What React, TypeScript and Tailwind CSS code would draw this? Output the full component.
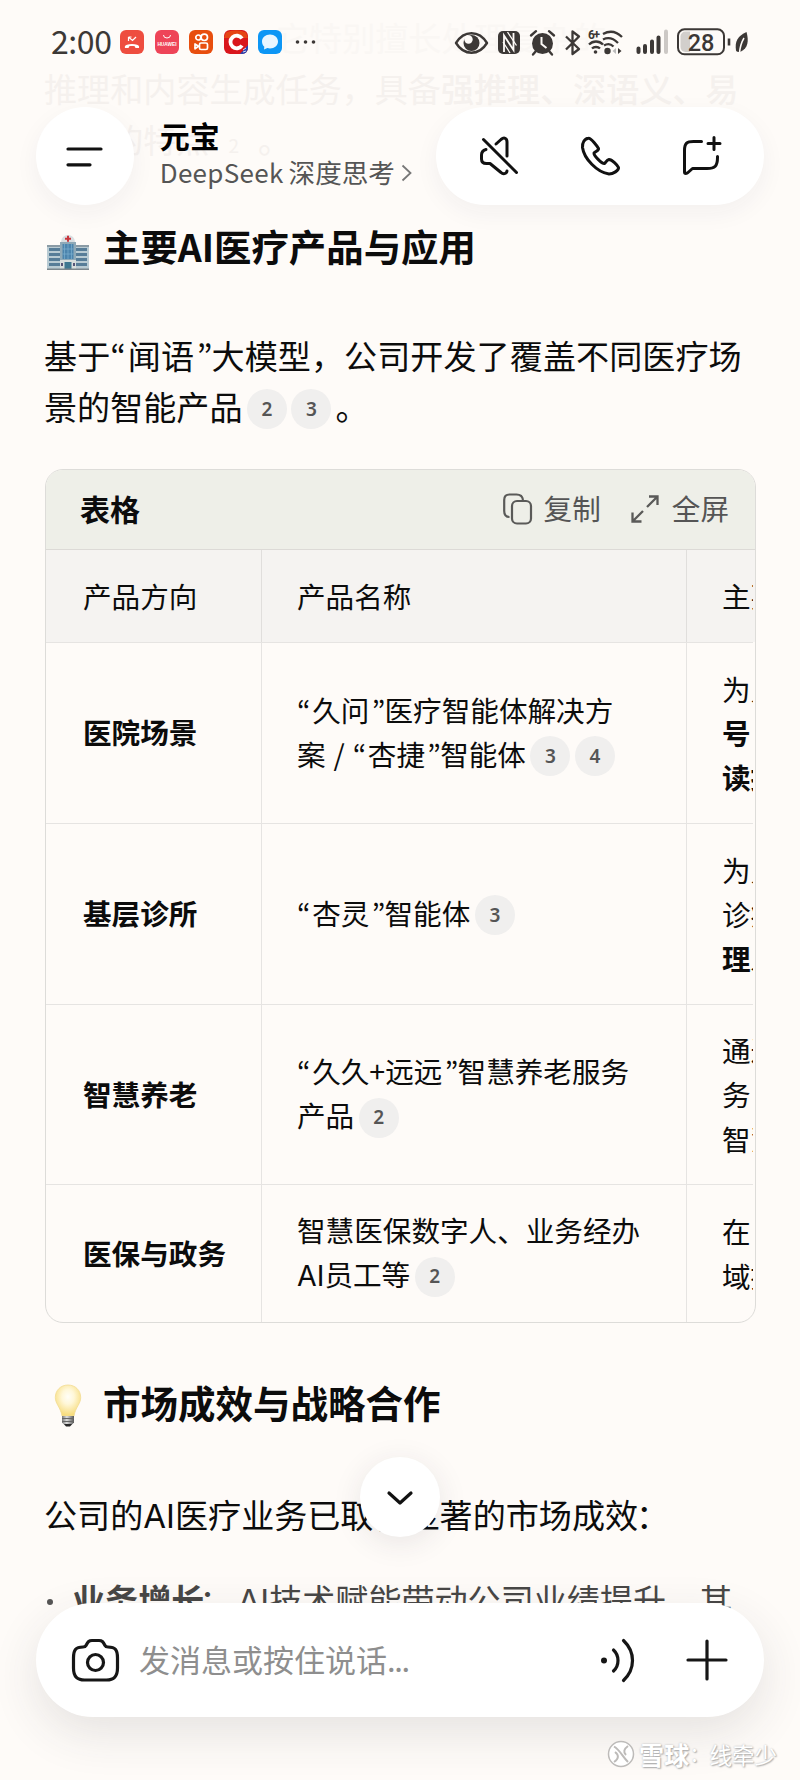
import type { ReactNode } from "react";

const SANS = "font-['Noto_Sans_CJK_SC','Noto_Sans',sans-serif]";

function Open() {
  return <span className="inline-block w-[0.53em] text-left font-['Noto_Sans_CJK_KR']">“</span>;
}

function Shut() {
  return <span className="inline-block w-[0.53em] pl-[0.08em] text-left font-['Noto_Sans_CJK_KR']">”</span>;
}

function AI() {
  return <span className="font-['Inter']">AI</span>;
}

function Ref({ n }: { n: number }) {
  return (
    <span className="ml-[4.500px] inline-flex h-10 w-10 -translate-y-[2px] items-center justify-center rounded-full bg-[#f0efee] align-middle font-['Noto_Sans'] text-[19px] leading-none font-semibold text-[#555]">
      {n}
    </span>
  );
}

function StatusBar() {
  return (
    <div className="flex h-[84px] items-center px-[51px] pb-px text-[#3c3836]">
      <div className="w-[69px] pb-[3px] text-[32px] leading-none font-normal tracking-[-0.4px] whitespace-nowrap">2:00</div>
      <div className="flex gap-[10.6px]">
        <svg width="24" height="24" viewBox="0 0 24 24">
          <rect width="24" height="24" rx="6" fill="#ee4d3f" />
          <path d="M5 18c-.6-1.4.2-2.5 2-3.200 3-1.200 7-1.200 10 0 1.800.7 2.600 1.800 2 3.200h-3.500l-.8-1.700c-1.700-.5-3.700-.5-5.400 0L8.500 18z" fill="#fff" />
          <path d="M8.500 7v4M8.500 7h3M9 7.500l3.500 3L16 7" stroke="#fff" strokeWidth="1.200" fill="none" />
        </svg>
        <svg width="24" height="24" viewBox="0 0 24 24">
          <rect width="24" height="24" rx="6" fill="#ee4458" />
          <path d="M8.500 5a3.500 3 0 0 0 7 0" stroke="#fff" strokeWidth="1" fill="none" />
          <text x="12" y="15.500" textAnchor="middle" fontSize="4.800" fontWeight="700" fill="#fff" fontFamily="Liberation Sans">HUAWEI</text>
        </svg>
        <svg width="24" height="24" viewBox="0 0 24 24">
          <rect width="24" height="24" rx="6" fill="#e84e0e" />
          <g fill="none" stroke="#fff" strokeWidth="1.700">
            <circle cx="9.300" cy="7.500" r="2.500" />
            <circle cx="15.300" cy="7.300" r="3.200" />
            <rect x="10.500" y="13" width="8" height="6.500" rx="1.500" />
            <path d="M9.500 16.200L6 14v4.800z" strokeLinejoin="round" />
          </g>
        </svg>
        <svg width="24" height="24" viewBox="0 0 24 24">
          <rect width="24" height="24" rx="6" fill="#d9161c" />
          <path d="M2 2.500Q12-2 22 2.500L24 8H0z" fill="#ea5a12" opacity=".7" />
          <path d="M24 15v3a6 6 0 0 1-6 6h-2z" fill="#2745b5" />
          <path d="M18 8.500A6.300 6.300 0 1 0 18 15.500" stroke="#fff" strokeWidth="3.800" fill="none" />
          <path d="M19 20l3-2M19 22l3-1" stroke="#fff" strokeWidth=".8" />
        </svg>
        <svg width="24" height="24" viewBox="0 0 24 24">
          <rect width="24" height="24" rx="6" fill="#0d96f5" />
          <path d="M12 4.500c4.500 0 8 3 8 7s-3.500 7-8 7c-1 0-1.800-.1-2.600-.4L6 19.500l.3-2.800C4.900 15.400 4 13.600 4 11.500c0-4 3.500-7 8-7z" fill="#eaf6ff" />
        </svg>
      </div>
      <svg className="ml-[13px]" width="22" height="6" viewBox="0 0 22 6" fill="#3c3836">
        <circle cx="2.500" cy="3" r="1.800" />
        <circle cx="10.500" cy="3" r="1.800" />
        <circle cx="18.500" cy="3" r="1.800" />
      </svg>
      <svg className="ml-auto" width="296" height="30" viewBox="453 26 296 30" fill="none" stroke="#3c3836">
        <path d="M456 42C464 29 479 29 487 42C479 55 464 55 456 42Z" strokeWidth="2.400" strokeLinejoin="round" />
        <circle cx="471.500" cy="42" r="8" fill="#3c3836" stroke="none" />
        <circle cx="468.500" cy="38.500" r="4.200" fill="#fefbf8" stroke="none" />
        <rect x="498" y="30" width="22" height="23" rx="5" fill="#3c3836" stroke="none" />
        <path d="M504 51V34.500L513.500 49V32" stroke="#fefbf8" strokeWidth="1.800" />
        <path d="M507.500 31L516.500 44.500M510 52l-7-11" stroke="#fefbf8" strokeWidth="1.300" />
        <circle cx="542.500" cy="42.500" r="10.500" fill="#3c3836" stroke="none" />
        <path d="M531 34.500l5-4.300M554 34.500l-5-4.300M536 50l-3 3.500M549 50l3 3.500" strokeWidth="2.400" strokeLinecap="round" />
        <path d="M541.500 36v7l5 4" stroke="#fefbf8" strokeWidth="2" />
        <path d="M566 35.500L579 48L572.500 53V30.500L579 35.500L566 48.500" strokeWidth="2.300" strokeLinejoin="round" />
        <text x="588" y="38" fontSize="12" fontWeight="700" fill="#3c3836" stroke="none" fontFamily="Roboto" textLength="12">6+</text>
        <path d="M603 33C611 28.500 617 31 622 36M603 38.500C609 35.500 614 38 618 42M604 44.500C608 42 611 43 613.500 45.500M589 43.500C593 39.500 599 39.500 603 43.500M592 47.500C594 45.500 598 45.500 600 47.500" strokeWidth="2.300" />
        <circle cx="595.500" cy="51" r="1.800" fill="#3c3836" stroke="none" />
        <circle cx="607.500" cy="50" r="3.200" fill="#3c3836" stroke="none" />
        <path d="M616 47v6l-3.500-3z" fill="#bbb" stroke="none" />
        <path d="M618 47v6l3.500-3z" fill="#3c3836" stroke="none" />
        <path d="M638.500 47.500V51M645 45V51M652 40.500V51M658.500 36.500V51" strokeWidth="4" strokeLinecap="round" />
        <path d="M666 30.500V51" stroke="#ccc8c5" strokeWidth="4" strokeLinecap="round" />
        <rect x="678" y="28.300" width="46" height="25" rx="6.500" strokeWidth="2" />
        <path d="M685.500 30.500H690v20.500h-4.500a5 5 0 0 1-5-5v-10.500a5 5 0 0 1 5-5z" fill="#d2cfcc" stroke="none" />
        <text x="701" y="49.500" textAnchor="middle" fontSize="23.500" fontWeight="500" fill="#3c3836" stroke="none" fontFamily="Roboto">28</text>
        <path d="M729 37.500V44.500" strokeWidth="2.600" />
        <path d="M746.500 31C738 35 734.500 40 736 49.500C737 51.500 739.500 51 741 50.500C748 47 749 40 746.500 31Z" fill="#3c3836" stroke="none" />
        <path d="M744 37C741 42 740 46 739.500 52" stroke="#fefbf8" strokeWidth="1.500" />
      </svg>
    </div>
  );
}

function Header() {
  return (
    <header className="absolute inset-x-0 top-0">
      <StatusBar />
      <div className="flex px-9 pt-[23px]">
        <button className="flex h-[98px] w-[98px] items-center justify-center rounded-full bg-white shadow-[0_8px_24px_rgba(40,40,70,0.05)]">
          <svg width="38" height="24" viewBox="0.500 -0.500 38 24" stroke="#111" strokeWidth="3.200" strokeLinecap="round">
            <path d="M2.500 4.500H35.500M2.500 20.300H24.500" />
          </svg>
        </button>
        <div className="ml-[26px] w-[277px] pt-[6px] whitespace-nowrap">
          <div className="text-[30px] leading-[44px] font-bold text-black">元宝</div>
          <div className="flex items-center pt-px text-[26px] leading-[28px] text-[#555]">
            <span className="tracking-[0.3px]">DeepSeek</span>
            <span className="ml-[5px] text-[26.600px]">深度思考</span>
            <svg className="ml-[5px]" width="14" height="20" viewBox="0 0 14 20" fill="none" stroke="#777" strokeWidth="1.800">
              <path d="M2.500 3.500L10.500 11L2.500 18.500" />
            </svg>
          </div>
        </div>
        <div className="flex h-[98px] w-[329px] items-center rounded-full bg-white pl-[42px] shadow-[0_8px_24px_rgba(40,40,70,0.05)]">
          <svg width="264" height="44" viewBox="479 134 264 44" fill="none" stroke="#111" strokeWidth="3" strokeLinecap="round" strokeLinejoin="round">
            <path d="M484.500 139.500L517.500 172.500" />
            <path d="M497 144L502 139.500C505 137 508 138 508 142V156" />
            <path d="M487 149.500C483.500 150.500 482.500 152.500 482.500 155V159C482.500 162 484.500 163.500 487.500 163.500H491L502 172.500C504 174.500 507.500 174 508 171" />
            <path d="M589.500 138.200C592 137.800 598.500 146.500 599.500 148.500C600 150.500 596 151.500 595 153C594.500 155.500 603 164 605.500 163.500C607 162.500 607.500 160 610 159.500C613 159.500 618.500 165 619.500 167.500C620 170.500 614 174 610 174C598 172.500 585 158.500 583.500 147.500C583 143 585.500 138.500 589.500 138.200Z" />
            <path d="M702.500 141.500H694.500C687.500 141.500 685.500 143.500 685.500 150.500V172C685.500 174 688 173.500 689 172.500L693.500 168.500H708C716 168.500 718.500 166 718.500 157.500V156.500" />
            <path d="M715 137.500V149.500M709 143.500H721" />
          </svg>
        </div>
      </div>
    </header>
  );
}

function Hospital() {
  return (
    <svg width="42" height="36" viewBox="0 0 42 36">
      <path d="M0 10h14v25H0zM28 10h14v25H28z" fill="#b9cbd3" />
      <path d="M0 10h14v2H0zM28 10h14v2H28z" fill="#8b9ba5" />
      <path d="M2 13h11v3H2zM2 18h11v3H2zM2 23h11v3H2zM2 28h11v3H2zM29 13h11v3H29zM29 18h11v3H29zM29 23h11v3H29zM29 28h11v3H29z" fill="#577d98" />
      <path d="M13 7h16v28H13z" fill="#8fa9b7" />
      <path d="M15.500 9h11v15h-11z" fill="#4c84ad" />
      <path d="M17.500 9v15M21 9v15M24.500 9v15M15.500 14h11M15.500 19h11" stroke="#7bb0d0" strokeWidth=".7" />
      <path d="M13 25h16v10H13z" fill="#d7dedd" />
      <path d="M17.500 27h7v8h-7z" fill="#3e7790" />
      <path d="M14 28h2v3h-2zM26 28h2v3h-2z" fill="#557" />
      <path d="M14 7a7 7 0 0 1 14 0z" fill="#d9dfe2" />
      <path d="M21 .8v6M18 3.800h6" stroke="#c9353c" strokeWidth="2" />
      <path d="M0 34.200h42" stroke="#7c878d" strokeWidth="1.500" />
    </svg>
  );
}

function Bulb() {
  return (
    <svg width="28" height="44" viewBox="0 0 28 44">
      <defs>
        <radialGradient id="glow" cx=".5" cy=".38" r=".6">
          <stop offset="0" stopColor="#fffef8" />
          <stop offset=".4" stopColor="#fff7d8" />
          <stop offset="1" stopColor="#f7dc7c" />
        </radialGradient>
        <linearGradient id="base" x1="0" x2="1">
          <stop offset="0" stopColor="#777" />
          <stop offset=".4" stopColor="#ddd" />
          <stop offset="1" stopColor="#555" />
        </linearGradient>
      </defs>
      <path d="M14 1C21.500 1 26.700 6.500 26.700 13.500C26.700 20 21.500 23 20 32H8C6.500 23 1.300 20 1.300 13.500C1.300 6.500 6.500 1 14 1Z" fill="url(#glow)" stroke="#f2dc93" strokeWidth=".8" />
      <path d="M8 32h12v6.500l-3.500 3.500h-5L8 38.500z" fill="url(#base)" />
      <path d="M8 34.500h12M8 37.500h12" stroke="#666" strokeWidth="1" />
      <path d="M10 40h8l-2 2.500h-4z" fill="#292929" />
    </svg>
  );
}

function Row({ name, cell, extra, height }: { name: string; cell: ReactNode; extra: ReactNode; height: string }) {
  return (
    <div className={`grid w-[707px] grid-cols-[216px_425px_66px] border-t border-[#e6e4e2] ${height}`}>
      <div className="flex items-center border-r border-[#e6e4e2] pb-px pl-[37px] font-bold">{name}</div>
      <div className="flex items-center border-r border-[#e6e4e2] pl-[35px]">
        <div>{cell}</div>
      </div>
      <div className="flex items-center overflow-hidden pl-[35px]">
        <div>{extra}</div>
      </div>
    </div>
  );
}

function ProductTable() {
  return (
    <section className="mt-[37px] h-[854px] w-[711px] overflow-hidden rounded-[18px] border-[1.500px] border-[#dddcd9] text-[28.600px] leading-[44.200px] whitespace-nowrap text-[#0c0c0c]">
      <div className="flex h-[79px] items-center bg-[#eeefe8] pr-[26px] pl-[34px]">
        <div className="pb-[3px] text-[30px] font-bold">表格</div>
        <div className="ml-auto flex items-center pb-px text-[28.600px] text-[#555]">
          <svg width="30" height="32" viewBox="0.500 0 30 32" fill="none" stroke="#5a5a58" strokeWidth="2.200">
            <path d="M7 24C3 24 1.700 22 1.700 18V7C1.700 3 3.500 1.500 7 1.500H14C18 1.500 20 3 20.500 7" />
            <rect x="9.500" y="8" width="19" height="22.500" rx="5" />
          </svg>
          <span className="ml-[11px] pb-[2px]">复制</span>
          <svg className="ml-[30px]" width="28" height="28" viewBox="0 0 28 28" fill="none" stroke="#5a5a58" strokeWidth="2.300">
            <path d="M18 1.500H26.500V10M26 2L16 12M1.500 17.500V26.500H10.500M2 26L12 16" />
          </svg>
          <span className="ml-[13px] pb-[2px]">全屏</span>
        </div>
      </div>
      <div className="grid h-[93px] grid-cols-[216px_425px_66px] border-t border-[#dcdad6] bg-[#f5f3f1]">
        <div className="flex items-center border-r border-[#e0dedc] pl-[37px]">产品方向</div>
        <div className="flex items-center border-r border-[#e0dedc] pl-[35px]">产品名称</div>
        <div className="flex items-center overflow-hidden pl-[35px]">主要功能</div>
      </div>
      <Row
        height="h-[181px]"
        name="医院场景"
        cell={<><Open />久问<Shut />医疗智能体解决方<br /><span className="[word-spacing:1.500px]">案 / </span><Open />杏捷<Shut />智能体<Ref n={3} /><Ref n={4} /></>}
        extra={<>为人们提供<br /><b>号 导诊</b><br /><b>读报告</b></>}
      />
      <Row
        height="h-[181px]"
        name="基层诊所"
        cell={<><Open />杏灵<Shut />智能体<Ref n={3} /></>}
        extra={<>为人们提供<br />诊疗服务<br /><b>理人员</b></>}
      />
      <Row
        height="h-[180px]"
        name="智慧养老"
        cell={<><Open />久久+远远<Shut />智慧养老服务<br />产品<Ref n={2} /></>}
        extra={<>通过智能服<br />务 健康<br />智慧养老</>}
      />
      <Row
        height="h-[138px]"
        name="医保与政务"
        cell={<>智慧医保数字人、业务经办<br /><AI />员工等<Ref n={2} /></>}
        extra={<>在 医保领<br />域提供</>}
      />
    </section>
  );
}

function Composer() {
  return (
    <footer className="absolute inset-x-0 bottom-0 h-[220px] px-9 pt-[43px]">
      <div className="flex h-[114px] items-center rounded-full bg-white pr-[36px] pl-[35px] shadow-[0_16px_48px_rgba(50,50,60,0.12)]">
        <svg width="50" height="46" viewBox="0.500 -1 50 46" fill="none" stroke="#161616" strokeWidth="3.200" strokeLinejoin="round">
          <path d="M15.500 7.500C17.500 3.500 18.500 2.500 21.500 2.500H28.500C31.500 2.500 32.500 3.500 34.500 7.500C35 8.500 36 9 37.500 9C45 9 47 12 47 20V30C47 39 43 42 36 42H14C7 42 3 39 3 30V20C3 12 5 9 12.500 9C14 9 15 8.500 15.500 7.500Z" />
          <circle cx="25" cy="24.500" r="8" />
        </svg>
        <span className="ml-[18px] pb-[3px] text-[31px] leading-none text-[#8e8e8e]">发消息或按住说话<span className="tracking-[-1.400px]">...</span></span>
        <svg className="ml-auto" width="36" height="46" viewBox="0.500 -1 36 46" fill="none" stroke="#161616" strokeWidth="3.200" strokeLinecap="round">
          <circle cx="4.500" cy="22.500" r="3" fill="#161616" stroke="none" />
          <path d="M14 12C20 17.500 20 27.500 14 33M24 2.500C36 14 36 31 24 42.500" />
        </svg>
        <svg className="ml-[50px]" width="42" height="42" viewBox="0 0 42 42" stroke="#161616" strokeWidth="3.200" strokeLinecap="round">
          <path d="M21 2V40M2 21H40" />
        </svg>
      </div>
      <div className="mt-[21px] mr-[-13px] flex items-center justify-end text-white [text-shadow:1px_1px_1.500px_#aaa,0_0_2px_#bbb]">
        <svg width="28" height="28" viewBox="0 0 28 28" fill="none" stroke="#bdbbb9" strokeWidth="1.500">
          <circle cx="14" cy="14" r="12.500" fill="#fff" />
          <path d="M7 6.500C13 10 15 16 21 22M21 6C17 9 16 12 19 15M7 22C12 19 12 15 8 12" strokeWidth="2" />
        </svg>
        <span className="ml-[4px] text-[25px] leading-8 font-bold tracking-[0.300px]">雪球</span>
        <span className="w-[20px] text-[20px] leading-8">：</span>
        <span className="text-[22.500px] leading-8">线牵少</span>
      </div>
    </footer>
  );
}

export default function App() {
  return (
    <div className={`relative h-[1780px] w-[800px] overflow-hidden bg-[#fefbf8] ${SANS}`}>
      <main className="px-[45px] text-[33.100px] leading-[51px] whitespace-nowrap text-[#0c0c0c]">
        <div className="-ml-px h-[220px] pt-[12px] text-[#f5f1ee]">
          <p className="pl-[232px] text-[#faf7f4]">它特别擅长处理复杂的</p>
          <p>推理和内容生成任务，具备<span className="font-medium">强推理、深语义、易</span></p>
          <p>用性的特点<span className="px-[19px] align-middle text-[19px]">2</span>。</p>
        </div>
        <h2 className="flex h-[52px] items-center text-[37.400px] font-bold">
          <span className="mt-[13px] ml-[2px] w-[56px]"><Hospital /></span>
          主要AI医疗产品与应用
        </h2>
        <p className="-ml-px mt-[58px] tracking-[0.050px]">
          基于<Open />闻语<Shut />大模型，公司开发了覆盖不同医疗场
        </p>
        <p className="-ml-px h-[51px]">景的智能产品<Ref n={2} /><Ref n={3} /><span className="ml-[4px]">。</span></p>
        <ProductTable />
        <h2 className="mt-[52px] flex h-[52px] items-center text-[37.500px] font-bold">
          <span className="mt-[10px] ml-[9px] w-[49px]"><Bulb /></span>
          市场成效与战略合作
        </h2>
        <p className="-ml-px mt-[62px]">公司的<AI />医疗业务已取得显著的市场成效<span className="-ml-[2px]">：</span></p>
        <div className="mt-[32px] flex text-[#484746]">
          <span className="mt-[25px] mr-[19px] ml-[2px] h-[6px] w-[6px] rounded-full bg-[#555]" />
          <p><b>业务增长</b><span className="mr-[5px] -ml-[5px]">：</span><AI />技术赋能带动公司业绩提升，其</p>
        </div>
      </main>
      <Header />
      <Composer />
      <button className="absolute top-[1457px] left-[360px] flex h-20 w-20 items-center justify-center rounded-full bg-white shadow-[0_6px_30px_rgba(50,40,60,0.1)]">
        <svg width="30" height="20" viewBox="0 0 30 20" fill="none" stroke="#111" strokeWidth="3.200" strokeLinecap="round" strokeLinejoin="round">
          <path d="M4 6L15 16L26 6" />
        </svg>
      </button>
    </div>
  );
}
